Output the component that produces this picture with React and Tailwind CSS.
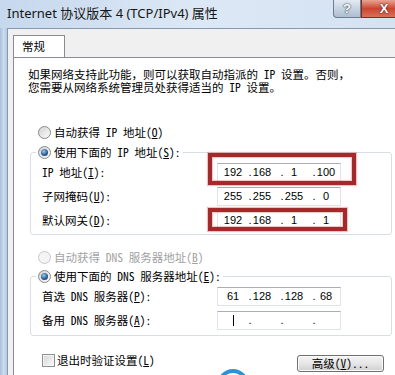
import React from 'react'

const BODY_FONT = "font-['Noto_Sans_Mono_CJK_SC','Noto_Sans_CJK_SC',monospace]"

function Radio({ checked, disabled }) {
  return (
    <span
      className={`w-[13px] h-[13px] rounded-full border shrink-0 flex items-center justify-center ${
        disabled
          ? 'border-[#c8c8c8] bg-[#f4f4f4]'
          : 'border-[#8a8a8a] bg-linear-to-br from-[#d2d2d2] to-[#fcfcfc]'
      }`}
    >
      {checked && (
        <span className="w-[7px] h-[7px] rounded-full bg-[radial-gradient(circle_at_40%_35%,#9cc9ef,#2b5d98_55%,#153864)]" />
      )}
    </span>
  )
}

function Acc({ children }) {
  return <span className="underline underline-offset-[1px]">{children}</span>
}

function IpBox({ parts, cursor }) {
  const field = (v, i) => (
    <span key={'f' + i} className={`${i === 0 ? 'w-[28px]' : 'w-[18px]'} flex justify-center`}>
      {v}
    </span>
  )
  return (
    <div className="w-[124px] h-[19px] border border-[#dfe3ea] border-t-[#abadb3] bg-white flex items-center pl-[1px] text-[11px] font-['Liberation_Sans',Arial,sans-serif] text-black">
      {cursor ? (
        <span className="w-[28px] flex justify-center">
          <span className="w-[1px] h-[11px] bg-black" />
        </span>
      ) : (
        field(parts[0], 0)
      )}
      <span className="w-[6px] text-center">.</span>
      {field(parts[1], 1)}
      <span className="w-[8px]" />
      <span className="w-[6px] text-center">.</span>
      {field(parts[2], 2)}
      <span className="w-[8px]" />
      <span className="w-[6px] text-center">.</span>
      {field(parts[3], 3)}
    </div>
  )
}

function Row({ label, children }) {
  return (
    <div className="h-[19px] flex items-center">
      <span className="w-[175px] shrink-0">{label}</span>
      <div className="relative">{children}</div>
    </div>
  )
}

export default function App() {
  return (
    <div className={`w-[395px] h-[375px] overflow-hidden flex flex-col bg-[#c4d7ed] text-black ${BODY_FONT}`}>
      {/* Title bar */}
      <div className="h-[28px] shrink-0 flex items-start bg-linear-to-r from-[#c6d8ed] via-[#dce8f5] to-[#d4e2f2]">
        <div className="flex-1 min-w-0 h-full flex items-center pl-[7px] text-[13px] text-[#161616] whitespace-nowrap font-['Noto_Sans','Noto_Sans_CJK_SC',sans-serif]">
          Internet 协议版本 4 (TCP/IPv4) 属性
        </div>
        <div className="shrink-0 w-[28px] h-[18px] border border-t-0 border-[#6c7c91] rounded-bl-[4px] bg-linear-to-b from-[#e3eaf3] to-[#aebdcf] flex items-center justify-center text-[13px] font-bold text-white font-['Liberation_Sans',sans-serif] [text-shadow:0_0_2px_#2c3d52,0_0_1px_#2c3d52]">
          ?
        </div>
        <div className="shrink-0 w-[46px] h-[18px] mr-[-12px] border border-t-0 border-[#7a3024] bg-linear-to-b from-[#e9a391] via-[#c9452f] to-[#d8705a] flex items-center justify-center text-[13px] font-bold text-white font-['Liberation_Sans',sans-serif] [text-shadow:0_0_2px_#5a1a10,0_0_1px_#5a1a10]">
          X
        </div>
      </div>

      {/* Frame + client */}
      <div className="flex-1 flex min-h-0">
        <div className="w-[7px] shrink-0 bg-linear-to-r from-[#a7bfda] via-[#cbdcef] to-[#b3c9e3]" />
        <div className="flex-1 min-w-0 flex flex-col border-l border-t border-[#8799b0] bg-[#f0f0f0] pl-[5px] pt-[6px]">
          {/* Tab */}
          <div className="relative mb-[-1px] w-[52px] h-[23px] bg-white border border-b-0 border-[#898c95] pl-[8px] pt-[3px] text-[11.5px] leading-[14px]">
            常规
          </div>

          {/* Panel */}
          <div className="relative flex-1 bg-white border-l border-t border-[#898c95] text-[11.5px] leading-[13px]">
            <p className="mt-[10px] ml-[14px] whitespace-nowrap">
              如果网络支持此功能，则可以获取自动指派的 IP 设置。否则，
              <br />
              您需要从网络系统管理员处获得适当的 IP 设置。
            </p>

            <div className="mt-[30px] ml-[24px] h-[16px] flex items-center gap-[3px] whitespace-nowrap">
              <Radio />
              <span>自动获得 IP 地址(<Acc>O</Acc>)</span>
            </div>

            <fieldset className="mt-[4px] ml-[16px] mr-[3px] border border-[#d5dfe5] rounded-[3px] pb-[4px]">
              <legend className="ml-[5px] px-[2px]">
                <div className="h-[16px] flex items-center gap-[3px] whitespace-nowrap">
                  <Radio checked />
                  <span>使用下面的 IP 地址(<Acc>S</Acc>):</span>
                </div>
              </legend>
              <div className="pt-[3px] px-[11px] flex flex-col gap-[5px] whitespace-nowrap">
                <Row label={<>IP 地址(<Acc>I</Acc>):</>}>
                  <IpBox parts={['192', '168', '1', '100']} />
                  <div className="absolute left-[-9px] top-[-10px] w-[148px] h-[32px] border-[4px] border-[#a3292a] shadow-[0_0_1px_1px_rgba(214,120,120,0.45),inset_0_0_1px_1px_rgba(214,120,120,0.45)]" />
                </Row>
                <Row label={<>子网掩码(<Acc>U</Acc>):</>}>
                  <IpBox parts={['255', '255', '255', '0']} />
                </Row>
                <Row label={<>默认网关(<Acc>D</Acc>):</>}>
                  <IpBox parts={['192', '168', '1', '1']} />
                  <div className="absolute left-[-9px] top-[-3px] w-[139px] h-[23px] border-[4px] border-[#a3292a] shadow-[0_0_1px_1px_rgba(214,120,120,0.45),inset_0_0_1px_1px_rgba(214,120,120,0.45)]" />
                </Row>
              </div>
            </fieldset>

            <div className="mt-[14px] ml-[24px] h-[16px] flex items-center gap-[3px] whitespace-nowrap text-[#a2a2a2]">
              <Radio disabled />
              <span>自动获得 DNS 服务器地址(<Acc>B</Acc>)</span>
            </div>

            <fieldset className="mt-[3px] ml-[16px] mr-[3px] border border-[#d5dfe5] rounded-[3px] pb-[5px]">
              <legend className="ml-[5px] px-[2px]">
                <div className="h-[16px] flex items-center gap-[3px] whitespace-nowrap">
                  <Radio checked />
                  <span>使用下面的 DNS 服务器地址(<Acc>E</Acc>):</span>
                </div>
              </legend>
              <div className="pt-[3px] px-[11px] flex flex-col gap-[5px] whitespace-nowrap">
                <Row label={<>首选 DNS 服务器(<Acc>P</Acc>):</>}>
                  <IpBox parts={['61', '128', '128', '68']} />
                </Row>
                <Row label={<>备用 DNS 服务器(<Acc>A</Acc>):</>}>
                  <IpBox parts={['', '', '', '']} cursor />
                </Row>
              </div>
            </fieldset>

            <div className="mt-[19px] ml-[28px] mr-[11px] flex items-start justify-between">
              <div className="mt-[-1px] flex items-center gap-[2px] whitespace-nowrap">
                <span className="w-[13px] h-[13px] border border-[#8e8f8f] bg-linear-to-br from-[#d6d6d6] to-[#fbfbfb] shadow-[inset_0_0_0_1px_#f4f4f4]" />
                <span>退出时验证设置(<Acc>L</Acc>)</span>
              </div>
              <div className="w-[87px] h-[17px] border border-[#707070] rounded-[3px] bg-linear-to-b from-[#f4f4f4] via-[#e6e6e6] to-[#cfcfcf] shadow-[inset_0_0_0_1px_#fbfbfb] flex items-center justify-center whitespace-nowrap">
                高级(<Acc>V</Acc>)...
              </div>
            </div>

            {/* watermark edge peeking at the bottom */}
            <div className="absolute left-[203px] top-[311px] w-[32px] h-[32px] rounded-full border-[4px] border-[#2b93d8]" />
          </div>
        </div>
      </div>
    </div>
  )
}
